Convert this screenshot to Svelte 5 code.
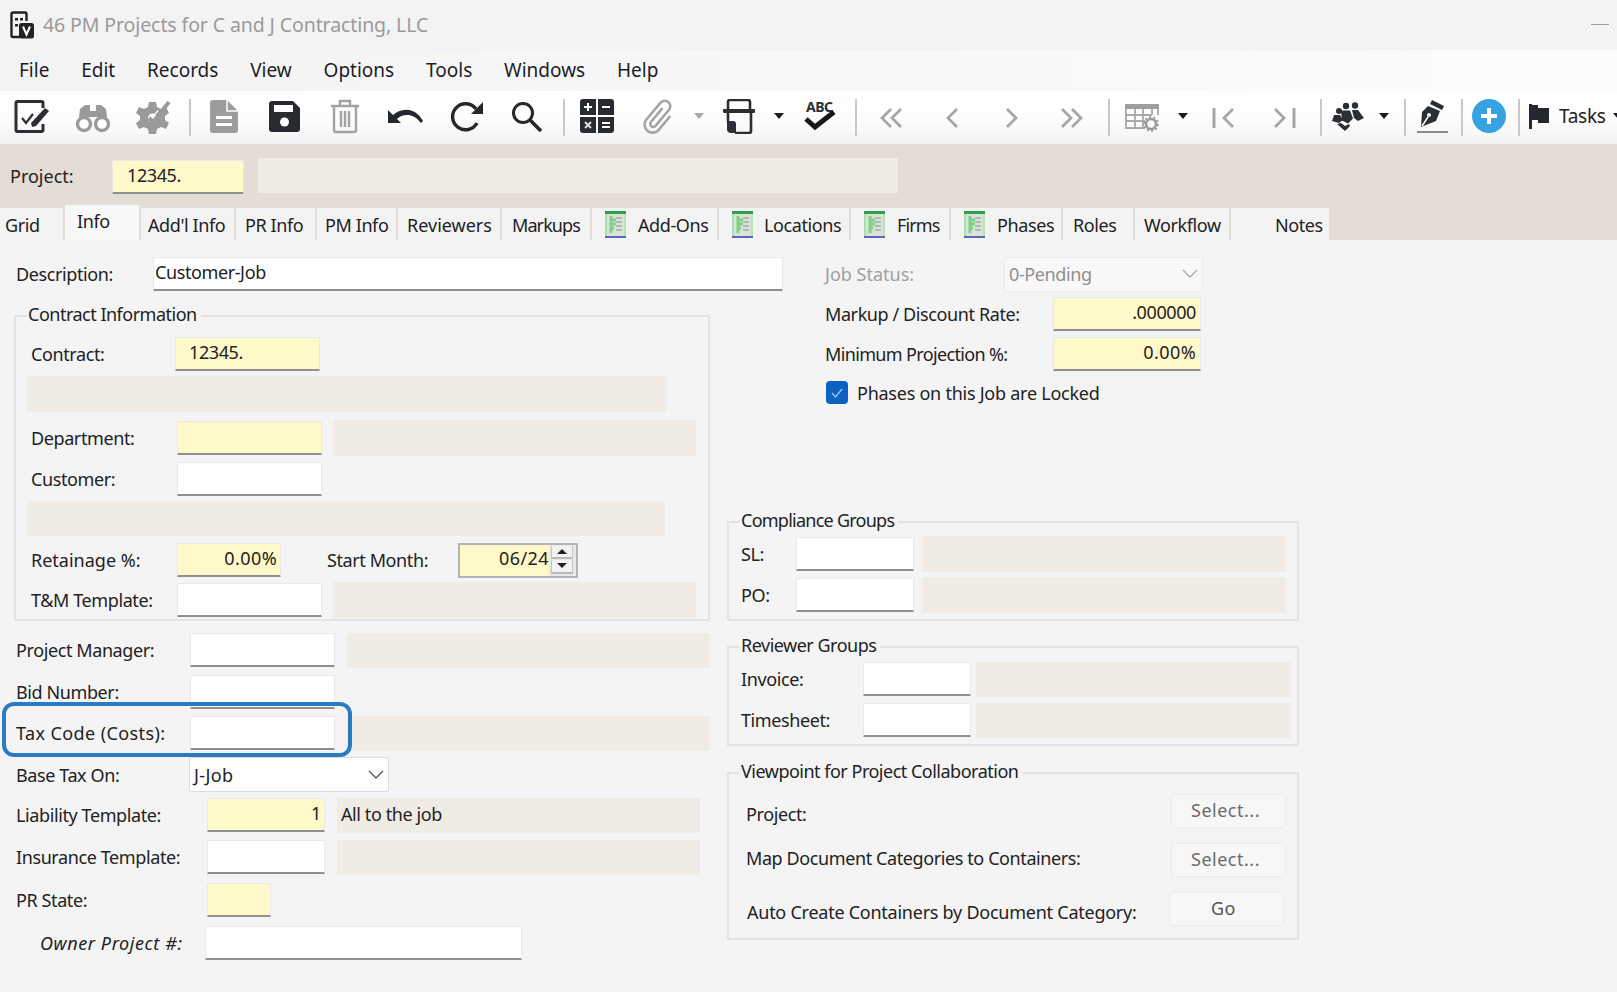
<script>
  const menu = ['File', 'Edit', 'Records', 'View', 'Options', 'Tools', 'Windows', 'Help'];
  const tabs = [
    { t: 'Grid', c: 'tw-grid' },
    { t: 'Info', c: 'tw-info active' },
    { t: "Add'l Info", c: 'tw-addl' },
    { t: 'PR Info', c: 'tw-pr' },
    { t: 'PM Info', c: 'tw-pm' },
    { t: 'Reviewers', c: 'tw-rev' },
    { t: 'Markups', c: 'tw-mark' },
    { t: 'Add-Ons', c: 'tw-addons', i: true },
    { t: 'Locations', c: 'tw-loc', i: true },
    { t: 'Firms', c: 'tw-firms', i: true },
    { t: 'Phases', c: 'tw-phases', i: true },
    { t: 'Roles', c: 'tw-roles' },
    { t: 'Workflow', c: 'tw-work' },
    { t: 'Notes', c: 'tw-notes' }
  ];
</script>

<div class="app">
  <header class="title">
    <svg class="appicon" width="24" height="28" viewBox="0 0 24 28">
      <path d="M10 26H3a1.5 1.5 0 0 1-1.5-1.5V3A1.5 1.5 0 0 1 3 1.5h12A1.5 1.5 0 0 1 16.500 3v7" fill="none" stroke="#222" stroke-width="2.400"/>
      <rect x="5" y="7" width="3" height="2.500" fill="#222"/><rect x="5" y="13" width="3" height="2.500" fill="#222"/><rect x="10" y="7" width="3" height="2.500" fill="#222"/>
      <rect x="9" y="12" width="15" height="15.500" rx="2.500" fill="#222"/>
      <path d="M13 15.500l3.500 8 3.500-8" fill="none" stroke="#fff" stroke-width="2"/>
    </svg>
    <span class="titletext">46 PM Projects for C and J Contracting, LLC</span>
    <span class="minimize"></span>
  </header>

  <nav class="menu">
    {#each menu as m}<span class="mi">{m}</span>{/each}
  </nav>

  <div class="toolbar">
    <div class="tbinner">
      <svg class="tb" style="left:14px;top:2px" width="36" height="36" viewBox="0 0 36 36"><path d="M29 9V4a1.500 1.500 0 0 0-1.500-1.500h-24A1.500 1.500 0 0 0 2 4v27a1.500 1.500 0 0 0 1.500 1.500h24A1.500 1.500 0 0 0 29 31v-6" fill="none" stroke="#2b2f33" stroke-width="3"/><path d="M8 19l4 5 7-9" fill="none" stroke="#2b2f33" stroke-width="2.200"/><path d="M17 24l1 4 4-1 13-15-4-3z" fill="#2b2f33"/></svg>
      <svg class="tb" style="left:75px;top:6px" width="36" height="30" viewBox="0 0 36 30"><g fill="#9a9a9a"><path d="M5 6l5-4h5v12H4z"/><path d="M31 6l-5-4h-5v12h11z"/><rect x="15" y="8" width="6" height="6"/></g><circle cx="9" cy="21" r="6.500" fill="#fff" stroke="#9a9a9a" stroke-width="3.400"/><circle cx="27" cy="21" r="6.500" fill="#fff" stroke="#9a9a9a" stroke-width="3.400"/></svg>
      <svg class="tb" style="left:135px;top:2px" width="36" height="36" viewBox="0 0 36 36"><path d="M14 3h7l1 5 4 2 5-2 3 6-4 3v4l4 3-3 6-5-2-4 2-1 5h-7l-1-5-4-2-5 2-3-6 4-3v-4l-4-3 3-6 5 2 4-2z" fill="#9a9a9a"/><circle cx="17.500" cy="19" r="4.500" fill="#fff"/><path d="M14 19l4 4L34 3" fill="none" stroke="#9a9a9a" stroke-width="4"/><path d="M16 15.500l2 2 5-6" fill="none" stroke="#fff" stroke-width="1.200"/></svg>
      <span class="sep" style="left:189px"></span>
      <svg class="tb" style="left:210px;top:3px" width="28" height="33" viewBox="0 0 28 33"><path d="M3 0h14l11 11v19a3 3 0 0 1-3 3H3a3 3 0 0 1-3-3V3a3 3 0 0 1 3-3z" fill="#9c9c9c"/><path d="M17 0v11h11" fill="none" stroke="#fff" stroke-width="1.500"/><rect x="6" y="16" width="16" height="3" fill="#fff"/><rect x="6" y="23" width="16" height="3" fill="#fff"/></svg>
      <svg class="tb" style="left:269px;top:4px" width="31" height="31" viewBox="0 0 31 31"><path d="M3 0h21l7 7v21a3 3 0 0 1-3 3H3a3 3 0 0 1-3-3V3a3 3 0 0 1 3-3z" fill="#272b2f"/><rect x="5" y="4" width="19" height="7" fill="#fff"/><circle cx="15.500" cy="21" r="4.500" fill="#fff"/></svg>
      <svg class="tb" style="left:330px;top:2px" width="30" height="35" viewBox="0 0 30 35"><path d="M1 7h28M10 7V2h10v5M4 7v24a2 2 0 0 0 2 2h18a2 2 0 0 0 2-2V7M11 12v16M15 12v16M19 12v16" fill="none" stroke="#a2a2a2" stroke-width="2.400"/></svg>
      <svg class="tb" style="left:388px;top:10px" width="36" height="18" viewBox="0 0 36 18"><path d="M0 16V3l5 5C12 1 27-1 35 14l-2 2C26 6 15 6 9 12l4 4z" fill="#24282c"/></svg>
      <svg class="tb" style="left:450px;top:3px" width="34" height="32" viewBox="0 0 34 32"><path d="M27 23A13 13 0 1 1 26 9" fill="none" stroke="#24282c" stroke-width="3.400"/><path d="M33 2v12H21z" fill="#24282c"/></svg>
      <svg class="tb" style="left:511px;top:5px" width="32" height="30" viewBox="0 0 32 30"><circle cx="12" cy="11" r="9.500" fill="none" stroke="#24282c" stroke-width="3"/><path d="M19 18l11 11" stroke="#24282c" stroke-width="3.600"/></svg>
      <span class="sep" style="left:563px"></span>
      <svg class="tb" style="left:580px;top:2px" width="34" height="34" viewBox="0 0 34 34"><g fill="#282c30"><path d="M3 0h13v16H0V3a3 3 0 0 1 3-3z"/><path d="M18 0h13a3 3 0 0 1 3 3v13H18z"/><path d="M0 18h16v16H3a3 3 0 0 1-3-3z"/><path d="M18 18h16v13a3 3 0 0 1-3 3H18z"/></g><path d="M4 8h8M8 4v8M22 8h8M22 24h8M22 28h8" stroke="#fff" stroke-width="2"/><path d="M5 23l6 6M11 23l-6 6" stroke="#ddd" stroke-width="2"/></svg>
      <svg class="tb" style="left:642px;top:2px" width="34" height="36" viewBox="0 0 34 36"><path transform="rotate(40 17 18)" d="M14 9v18a3 3 0 0 0 6 0V6a5.500 5.500 0 0 0-11 0v22a8 8 0 0 0 16 0V10" fill="none" stroke="#a4a4a4" stroke-width="2.600"/></svg>
      <span class="caret gray" style="left:694px"></span>
      <svg class="tb" style="left:723px;top:2px" width="32" height="35" viewBox="0 0 32 35"><path d="M5 10V3a2 2 0 0 1 2-2h18a2 2 0 0 1 2 2v7" fill="none" stroke="#2b2f33" stroke-width="2.600"/><rect x="0" y="10" width="32" height="4" rx="1" fill="#2b2f33"/><path d="M28 14v18a2 2 0 0 1-2 2H12M5 14v9" fill="none" stroke="#2b2f33" stroke-width="2.600"/><path d="M4 22h6a3 3 0 0 1 3 3v9H8a4 4 0 0 1-4-4z" fill="#2b2f33"/></svg>
      <span class="caret" style="left:774px"></span>
      <span class="abc">ABC</span>
      <svg class="tb" style="left:804px;top:13px" width="32" height="21" viewBox="0 0 32 21"><path d="M2 9l9 8L30 2" fill="none" stroke="#16191c" stroke-width="5"/></svg>
      <span class="sep" style="left:855px"></span>
      <svg class="tb" style="left:879px;top:11px" width="24" height="20" viewBox="0 0 24 20"><path d="M12 1L3 10l9 9M22 1l-9 9 9 9" fill="none" stroke="#a6a6a6" stroke-width="2.800"/></svg>
      <svg class="tb" style="left:945px;top:11px" width="14" height="20" viewBox="0 0 14 20"><path d="M12 1l-9 9 9 9" fill="none" stroke="#a6a6a6" stroke-width="2.800"/></svg>
      <svg class="tb" style="left:1005px;top:11px" width="14" height="20" viewBox="0 0 14 20"><path d="M2 1l9 9-9 9" fill="none" stroke="#a6a6a6" stroke-width="2.800"/></svg>
      <svg class="tb" style="left:1060px;top:11px" width="24" height="20" viewBox="0 0 24 20"><path d="M2 1l9 9-9 9M12 1l9 9-9 9" fill="none" stroke="#a6a6a6" stroke-width="2.800"/></svg>
      <span class="sep" style="left:1108px"></span>
      <svg class="tb" style="left:1125px;top:7px" width="35" height="28" viewBox="0 0 35 28"><rect x="0" y="0" width="34" height="5" fill="#9e9e9e"/><path d="M1 5v19h19M1 11h26M1 17h19M1 24h18M10 5v19M18 5v19M27 5v6M33 5v6" fill="none" stroke="#a8a8a8" stroke-width="1.800"/><circle cx="26" cy="20" r="5" fill="none" stroke="#9a9a9a" stroke-width="2.600"/><circle cx="26" cy="20" r="7" fill="none" stroke="#9a9a9a" stroke-width="1.800" stroke-dasharray="2 2.400"/></svg>
      <span class="caret" style="left:1178px"></span>
      <svg class="tb" style="left:1212px;top:11px" width="24" height="20" viewBox="0 0 24 20"><path d="M2 0v20" stroke="#a6a6a6" stroke-width="3"/><path d="M21 1l-9 9 9 9" fill="none" stroke="#a6a6a6" stroke-width="2.800"/></svg>
      <svg class="tb" style="left:1272px;top:11px" width="24" height="20" viewBox="0 0 24 20"><path d="M22 0v20" stroke="#a6a6a6" stroke-width="3"/><path d="M3 1l9 9-9 9" fill="none" stroke="#a6a6a6" stroke-width="2.800"/></svg>
      <span class="sep" style="left:1320px"></span>
      <svg class="tb" style="left:1332px;top:5px" width="32" height="29" viewBox="0 0 32 29"><g fill="#2b2f33"><circle cx="14" cy="4" r="3.200"/><circle cx="23" cy="3.500" r="3.200"/><circle cx="7" cy="9" r="3"/><path d="M9 8.500h9l3 8-5 5-6-3z"/><path d="M20 8h6l6 8-6 3-4-3z"/><path d="M2 13h6l3 5-4 3-7-2z"/><path d="M5 22l4-1 4 3 4-2 1 2-5 5z"/></g></svg>
      <span class="caret" style="left:1379px"></span>
      <span class="sep" style="left:1404px"></span>
      <svg class="tb" style="left:1417px;top:3px" width="31" height="35" viewBox="0 0 31 35"><path d="M15 0l12 6-2 4-12-6z" fill="#2b2f33"/><path d="M11 6l12 5-4 10-15 6 1-15z" fill="#2b2f33"/><path d="M5 26l6-9" stroke="#fff" stroke-width="1.500"/><circle cx="12" cy="15" r="2" fill="#fff"/><rect x="0" y="31" width="31" height="2" fill="#8c8c8c"/></svg>
      <span class="sep" style="left:1461px"></span>
      <svg class="tb" style="left:1472px;top:2px" width="34" height="34" viewBox="0 0 34 34"><circle cx="17" cy="17" r="17" fill="#36a2e2"/><path d="M17 9v16M9 17h16" stroke="#fff" stroke-width="4"/></svg>
      <span class="sep" style="left:1518px"></span>
      <svg class="tb" style="left:1529px;top:7px" width="20" height="25" viewBox="0 0 20 25"><path d="M0 0h3v25H0z" fill="#24282c"/><path d="M3 1h6v3h11v15H9v-3H3z" fill="#24282c"/></svg>
      <span class="tasks">Tasks</span>
      <span class="caret" style="left:1613px"></span>
    </div>
  </div>

  <section class="band">
    <div class="projrow">
      <span class="projlabel">Project:</span>
      <span class="f y proj">12345.</span>
      <span class="ro projro"></span>
    </div>
    <div class="tabs">
      {#each tabs as tab}
        <div class="tab {tab.c}">
          {#if tab.i}
            <svg class="tabicon" width="21" height="27" viewBox="0 0 21 27">
              <rect x="0" y="0" width="21" height="27" fill="#d9e4d9"/>
              <rect x="0" y="0" width="21" height="3" fill="#2f9e44"/>
              <rect x="0" y="3" width="2" height="22" fill="#a5e0aa"/>
              <rect x="19" y="3" width="2" height="22" fill="#b7e2ba"/>
              <rect x="0" y="25" width="21" height="2" fill="#5f66bb"/>
              <path d="M11 7h6M11 11h6M11 15h6M11 19h6" stroke="#b4b9b4" stroke-width="2"/>
              <path d="M6 5v17M6 9h5M6 13h5M6 17h3" stroke="#7fd087" stroke-width="3" fill="none"/>
            </svg>
          {/if}
          <span>{tab.t}</span>
        </div>
      {/each}
    </div>
  </section>

  <main class="body">
    <div class="leftcol">
      <div class="row r-desc">
        <span class="lb w-desc">Description:</span>
        <span class="f desc">Customer-Job</span>
      </div>

      <div class="group contract">
        <span class="legend">Contract Information</span>
        <div class="row r-contract"><span class="lb w-ct">Contract:</span><span class="f y w145 tx">12345.</span></div>
        <div class="ro ct-ro1"></div>
        <div class="row r-dept"><span class="lb w-ct2">Department:</span><span class="f y w145"></span><span class="ro ct-ro2"></span></div>
        <div class="row r-cust"><span class="lb w-ct2">Customer:</span><span class="f w145"></span></div>
        <div class="ro ct-ro3"></div>
        <div class="row r-ret">
          <span class="lb w-ct2 wide">Retainage %:</span><span class="f y ret num wnum">0.00%</span>
          <span class="lb w-sm">Start Month:</span>
          <span class="spin"><span class="spinval wnum">06/24</span><span class="spinbtns"><b class="sb"><i class="up"></i></b><b class="sb"><i class="dn"></i></b></span></span>
        </div>
        <div class="row r-tm"><span class="lb w-ct2">T&amp;M Template:</span><span class="f w145"></span><span class="ro ct-ro2"></span></div>
      </div>

      <div class="row r-pm"><span class="lb w-a">Project Manager:</span><span class="f w145"></span><span class="ro a-ro"></span></div>
      <div class="row r-bid"><span class="lb w-a">Bid Number:</span><span class="f w145"></span></div>
      <div class="row r-tax">
        <span class="lb w-a wider">Tax Code (Costs):</span><span class="f w145"></span><span class="ro a-ro"></span>
        <span class="highlight"></span>
      </div>
      <div class="row r-base">
        <span class="lb w-a">Base Tax On:</span>
        <span class="select base"><span class="wider">J-Job</span><svg width="16" height="10" viewBox="0 0 16 10"><path d="M1 1l7 7 7-7" fill="none" stroke="#555" stroke-width="1.300"/></svg></span>
      </div>
      <div class="row r-liab"><span class="lb w-b">Liability Template:</span><span class="f y w118 num n1">1</span><span class="ro b-ro">All to the job</span></div>
      <div class="row r-ins"><span class="lb w-b">Insurance Template:</span><span class="f w118"></span><span class="ro b-ro"></span></div>
      <div class="row r-state"><span class="lb w-b">PR State:</span><span class="f y w64"></span></div>
      <div class="row r-owner"><span class="lb w-o widest"><em>Owner Project #:</em></span><span class="f w317"></span></div>
    </div>

    <div class="rightcol">
      <div class="row r-job">
        <span class="lb w-job dis wide">Job Status:</span>
        <span class="select status"><span>0-Pending</span><svg width="16" height="10" viewBox="0 0 16 10"><path d="M1 1l7 7 7-7" fill="none" stroke="#a8a8a8" stroke-width="1.300"/></svg></span>
      </div>
      <div class="row r-mk"><span class="lb w-mk">Markup / Discount Rate:</span><span class="f y w148 num">.000000</span></div>
      <div class="row r-min"><span class="lb w-mk tight">Minimum Projection %:</span><span class="f y w148 num wnum">0.00%</span></div>
      <div class="row r-chk">
        <span class="check"><svg width="14" height="12" viewBox="0 0 14 12"><path d="M2 6l3.500 4L12 2" fill="none" stroke="#9fc4ec" stroke-width="1.400"/></svg></span>
        <span class="lb slight">Phases on this Job are Locked</span>
      </div>

      <div class="group compliance">
        <span class="legend l2 lt">Compliance Groups</span>
        <div class="row g-r1"><span class="lb w-sl">SL:</span><span class="f w118b"></span><span class="ro c-ro"></span></div>
        <div class="row g-r2"><span class="lb w-sl">PO:</span><span class="f w118b"></span><span class="ro c-ro"></span></div>
      </div>

      <div class="group reviewer">
        <span class="legend l2">Reviewer Groups</span>
        <div class="row g-r1"><span class="lb w-inv">Invoice:</span><span class="f w108"></span><span class="ro r-ro"></span></div>
        <div class="row g-r2"><span class="lb w-inv">Timesheet:</span><span class="f w108"></span><span class="ro r-ro"></span></div>
      </div>

      <div class="group viewpoint">
        <span class="legend l2">Viewpoint for Project Collaboration</span>
        <div class="row v-r1"><span class="lb">Project:</span><span class="btn">Select...</span></div>
        <div class="row v-r2"><span class="lb">Map Document Categories to Containers:</span><span class="btn">Select...</span></div>
        <div class="row v-r3"><span class="lb slight">Auto Create Containers by Document Category:</span><span class="btn dark">Go</span></div>
      </div>
    </div>
  </main>
</div>

<style>
  :global(body) { margin: 0; background: #f3f3f3; }
  .app { width: 1617px; height: 992px; overflow: hidden; position: relative; background: #f4f4f4; color: #222; font-family: "Noto Sans", "Open Sans", sans-serif; font-size: 18px; letter-spacing: -0.4px; }
  .title { height: 50px; display: flex; align-items: center; background: #f3f3f3; position: relative; }
  .titletext { margin-left: 9px; font-size: 19.500px; color: #9a9a9a; letter-spacing: -0.1px; margin-top: -2px; }
  .appicon { margin-left: 10px; }
  .minimize { position: absolute; left: 1591px; top: 24px; width: 18px; height: 1px; background: #9a9a9a; }
  .menu { height: 41px; box-sizing: border-box; padding-bottom: 1px; display: flex; align-items: center; padding-left: 19px; gap: 31.800px; background: linear-gradient(90deg, #f3f3f3, #fcfcfc); font-size: 19px; color: #1d1d2a; letter-spacing: 0; }
  .toolbar { height: 53px; position: relative; background: linear-gradient(#fff 0, #fdfdfd 50%, #f3f3f3 100%); }
  .tbinner { position: absolute; left: 0; top: 6px; width: 100%; }
  .tb { position: absolute; }
  .sep { position: absolute; top: 2px; width: 2px; height: 37px; background: #c8c8c8; }
  .caret { position: absolute; top: 16px; width: 0; height: 0; border-left: 5px solid transparent; border-right: 5px solid transparent; border-top: 6px solid #1b1b1b; }
  .caret.gray { border-top-color: #aaa; }
  .abc { position: absolute; left: 806px; top: 0; font-size: 14px; font-weight: 700; color: #2b2f33; letter-spacing: -0.5px; }
  .tasks { position: absolute; left: 1559px; top: 6px; font-size: 19px; color: #222; letter-spacing: -0.3px; }

  .band { height: 96px; background: #e4ddd6; display: flex; flex-direction: column; }
  .projrow { height: 61px; display: flex; align-items: flex-start; padding-left: 10px; flex: none; }
  .projlabel { width: 102px; margin-top: 20px; letter-spacing: 0; }
  .f.proj { width: 132px; margin-top: 16px; padding-left: 14px; }
  .projro { margin-left: 14px; margin-top: 14px; width: 640px; height: 35px; }

  .tabs { height: 35px; display: flex; align-items: flex-end; gap: 2px; }
  .tab { height: 32px; background: #f3f3f3; display: flex; align-items: center; box-sizing: border-box; flex: none; position: relative; padding-top: 2px; }
  .tabicon { position: absolute; left: 13px; top: 3px; }
  .tab.active { height: 35px; background: #f8f8f8; align-items: flex-start; padding-top: 4px; }
  .tw-grid { width: 63px; padding-left: 5px; }
  .tw-info { width: 74px; padding-left: 12px; }
  .tw-addl { width: 93px; padding-left: 7px; }
  .tw-pr { width: 79px; padding-left: 9px; }
  .tw-pm { width: 79px; padding-left: 8px; }
  .tw-rev { width: 102px; padding-left: 9px; letter-spacing: 0; }
  .tw-mark { width: 88px; padding-left: 10px; letter-spacing: -0.9px; }
  .tw-addons { width: 125px; padding-left: 46px; }
  .tw-loc { width: 130px; padding-left: 45px; }
  .tw-firms { width: 98px; padding-left: 46px; letter-spacing: -0.9px; }
  .tw-phases { width: 110px; padding-left: 46px; }
  .tw-roles { width: 70px; padding-left: 10px; }
  .tw-work { width: 94px; padding-left: 9px; }
  .tw-notes { width: 98px; padding-left: 44px; }

  .body { display: flex; align-items: flex-start; }
  .leftcol { width: 727px; flex: none; }
  .rightcol { width: 572px; flex: none; }

  .row { display: flex; align-items: center; height: 34px; position: relative; }
  .lb { flex: none; white-space: nowrap; }
  .dis { color: #a0a0a0; }
  .wnum { letter-spacing: 0.4px; }
  .slight { letter-spacing: -0.25px; }
  .wide { letter-spacing: 0; }
  .wider { letter-spacing: 0.4px; }
  .widest { letter-spacing: 0.6px; }
  .tight { letter-spacing: -0.65px; }

  .f { display: block; box-sizing: border-box; height: 34px; flex: none; background: #fff; border: 1px solid #e9e9e9; border-bottom: 2px solid #8f8f8f; line-height: 28px; border-radius: 1px; padding: 0 3px; }
  .f.y { background: #fff8c9; }
  .num { text-align: right; }
  .f.tx { padding-left: 13px; }
  .desc.f { padding-left: 1px; }
  .ro { display: block; background: #f0ebe5; flex: none; box-sizing: border-box; }

  .r-desc { margin-top: 17px; padding-left: 16px; }
  .w-desc { width: 137px; }
  .desc { width: 630px; }

  .group { position: relative; box-sizing: border-box; border: 2px solid #e3e3e3; }
  .legend { position: absolute; left: 11px; top: -14px; background: #f4f4f4; padding: 0 4px 0 1px; line-height: 22px; white-space: nowrap; letter-spacing: -0.5px; }
  .legend.lt { letter-spacing: -0.75px; }
  .contract { margin: 24px 0 0 14px; width: 696px; height: 306px; padding: 20px 0 0 15px; }
  .w-ct { width: 144px; }
  .w-ct2 { width: 146px; }
  .w145 { width: 145px; }
  .ct-ro1 { width: 639px; height: 36px; margin: 5px 0 0 -4px; }
  .r-dept { margin-top: 9px; }
  .ct-ro2 { width: 363px; height: 36px; margin-left: 11px; }
  .r-cust { margin-top: 7px; }
  .ct-ro3 { width: 638px; height: 35px; margin: 5px 0 0 -4px; }
  .r-ret { margin-top: 7px; }
  .ret { width: 104px; }
  .w-sm { width: 131px; margin-left: 46px; }
  .spin { width: 120px; height: 35px; box-sizing: border-box; border: 2px solid #b4b4b4; background: #fff8c9; display: flex; position: relative; justify-content: flex-end; flex: none; }
  .spinval { line-height: 26px; position: absolute; right: 27px; top: 0; }
  .spinbtns { width: 27px; background: #e8e8e8; display: flex; flex-direction: column; align-items: stretch; justify-content: flex-start; padding: 1px 3px 2px 2px; box-sizing: border-box; gap: 1px; }
  .sb { flex: 1; display: flex; align-items: center; justify-content: center; background: #f2f2f2; border-bottom: 2px solid #b9b9b9; border-left: 1px solid #c4c4c4; border-right: 1px solid #c4c4c4; }
  .up { width: 0; height: 0; border: 5px solid transparent; border-top: 0; border-bottom: 5px solid #222; }
  .dn { width: 0; height: 0; border: 5px solid transparent; border-bottom: 0; border-top: 5px solid #222; }
  .r-tm { margin-top: 6px; }

  .r-pm { margin-top: 12px; padding-left: 16px; }
  .w-a { width: 174px; }
  .a-ro { width: 363px; height: 35px; margin-left: 12px; }
  .r-bid { margin-top: 8px; padding-left: 16px; }
  .r-tax { margin-top: 7px; padding-left: 16px; }
  .highlight { position: absolute; left: 2px; top: -14px; width: 350px; height: 55px; box-sizing: border-box; border: 4px solid #2a7bc4; border-radius: 12px; }
  .r-base { margin-top: 7px; padding-left: 16px; height: 35px; }
  .select { display: flex; align-items: center; justify-content: space-between; box-sizing: border-box; height: 35px; flex: none; border: 1px solid #dcdcdc; background: #fdfdfd; padding: 0 4px 0 4px; border-radius: 2px; }
  .base { width: 200px; margin-left: -1px; }
  .status { width: 199px; background: #f8f8f8; border-color: #ececec; color: #8f8f8f; }
  .r-liab { margin-top: 6px; padding-left: 16px; }
  .w-b { width: 191px; }
  .w118 { width: 118px; }
  .n1 { padding-right: 3px; }
  .b-ro { width: 363px; height: 35px; margin-left: 12px; padding-left: 4px; line-height: 33px; }
  .r-ins { margin-top: 8px; padding-left: 16px; }
  .r-state { margin-top: 9px; padding-left: 16px; }
  .w64 { width: 64px; }
  .r-owner { margin-top: 9px; padding-left: 40px; }
  .w-o { width: 165px; }
  .w317 { width: 317px; }

  .r-job { margin-top: 17px; padding-left: 98px; }
  .w-job { width: 179px; }
  .r-mk { margin-top: 6px; padding-left: 98px; }
  .w-mk { width: 228px; }
  .f.w148 { width: 148px; padding-right: 4px; }
  .r-min { margin-top: 6px; padding-left: 98px; }
  .r-chk { margin-top: 10px; padding-left: 99px; height: 23px; gap: 9px; }
  .check { width: 22px; height: 23px; border-radius: 4px; background: #0b62c0; display: flex; align-items: center; justify-content: center; flex: none; }

  .compliance { margin-top: 117px; height: 100px; padding: 14px 0 0 12px; }
  .reviewer { margin-top: 25px; height: 100px; padding: 14px 0 0 12px; }
  .viewpoint { margin-top: 26px; height: 168px; padding: 0 0 0 17px; }
  .group.compliance, .group.reviewer, .group.viewpoint { width: 572px; }
  .g-r2 { margin-top: 7px; }
  .w-sl { width: 55px; }
  .w118b { width: 118px; }
  .c-ro { width: 364px; height: 36px; margin-left: 8px; }
  .w-inv { width: 122px; }
  .w108 { width: 108px; }
  .r-ro { width: 315px; height: 35px; margin-left: 5px; }
  .v-r1, .v-r2, .v-r3 { justify-content: space-between; width: 540px; }
  .v-r1 { margin-top: 20px; }
  .v-r1 .lb { margin-top: 5px; }
  .v-r2 { margin-top: 15px; }
  .v-r2 .lb { margin-bottom: 4px; }
  .v-r3 { margin-top: 15px; margin-left: 1px; width: 537px; }
  .v-r3 .lb { margin-top: 6px; }
  .btn { width: 115px; height: 34px; box-sizing: border-box; border: 1px solid #ececec; background: #f7f7f7; border-radius: 4px; text-align: center; line-height: 30px; color: #6a6a6a; flex: none; padding-right: 6px; letter-spacing: 0.5px; }
  .btn.dark { color: #555; }
</style>
